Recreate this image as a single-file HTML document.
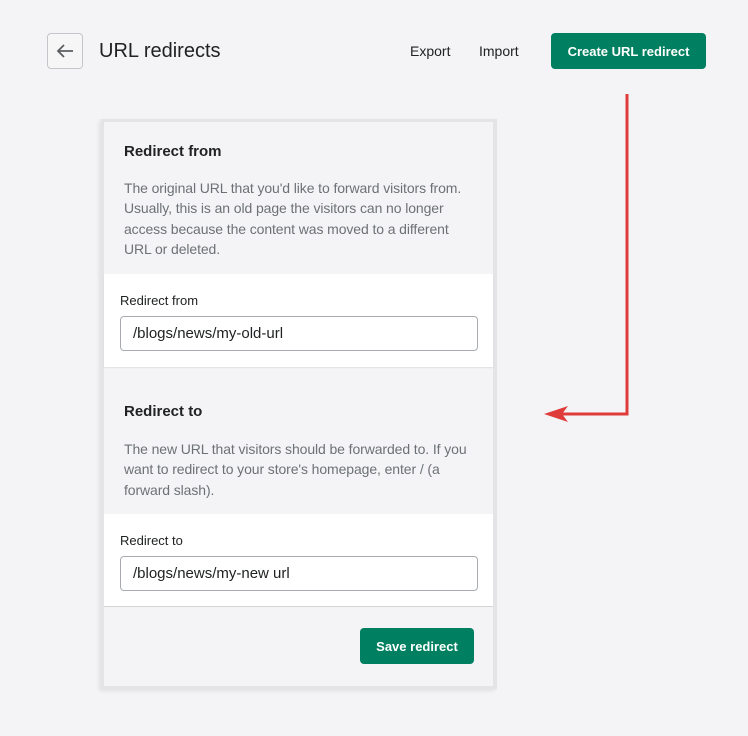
<!DOCTYPE html>
<html><head><meta charset="utf-8"><style>
*{margin:0;padding:0;box-sizing:border-box}
body{width:748px;height:736px;background:#f4f4f6;font-family:"Liberation Sans",sans-serif;position:relative;overflow:hidden;color:#202223}
.a{position:absolute;white-space:nowrap}
.back{left:47px;top:33px;width:36px;height:36px;border:1px solid #c4c7ca;border-radius:4px;background:#f6f6f7}
.btn{background:#008060;color:#fff;font-weight:bold;font-size:13px;border-radius:4px;display:flex;align-items:center;justify-content:center}
.card{left:101px;top:119px;width:396px;height:570px;background:#e4e4e6;box-shadow:-2px 2px 4px rgba(0,0,0,.08)}
.inner{left:104px;top:122px;width:389px;height:564px;background:#f4f4f6}
.white{background:#fff;left:104px;width:389px}
.h{font-size:15px;font-weight:bold;color:#202223}
.d{font-size:14px;line-height:20.3px;color:#6d7175;letter-spacing:-0.1px}
.lab{font-size:13px;color:#202223}
.inp{left:120px;width:358px;height:35px;border:1px solid #a8acb0;border-radius:4px;background:#fff;font-size:15px;padding-left:12px;line-height:33px;color:#202223}
</style></head><body>
<div class="a back"><svg width="34" height="34" viewBox="0 0 34 34"><path d="M25 17H10M16 11l-6 6 6 6" stroke="#5c5f62" stroke-width="1.8" fill="none"/></svg></div>
<div class="a" style="left:99px;top:40px;font-size:20px">URL redirects</div>
<div class="a" style="left:410px;top:43px;font-size:14px">Export</div>
<div class="a" style="left:479px;top:43px;font-size:14px">Import</div>
<div class="a btn" style="left:551px;top:33px;width:155px;height:36px">Create URL redirect</div>

<div class="a card"></div>
<div class="a inner"></div>
<div class="a h" style="left:124px;top:143px">Redirect from</div>
<div class="a d" style="left:124px;top:178px">The original URL that you'd like to forward visitors from.<br>Usually, this is an old page the visitors can no longer<br>access because the content was moved to a different<br>URL or deleted.</div>
<div class="a white" style="top:274px;height:93px;box-shadow:0 1px 1px rgba(0,0,0,.08)"></div>
<div class="a lab" style="left:120px;top:293px">Redirect from</div>
<div class="a inp" style="top:316px">/blogs/news/my-old-url</div>

<div class="a h" style="left:124px;top:403px">Redirect to</div>
<div class="a d" style="left:124px;top:439px">The new URL that visitors should be forwarded to. If you<br>want to redirect to your store's homepage, enter / (a<br>forward slash).</div>
<div class="a white" style="top:514px;height:93px;border-bottom:1px solid #d2d4d6"></div>
<div class="a lab" style="left:120px;top:533px">Redirect to</div>
<div class="a inp" style="top:556px">/blogs/news/my-new url</div>

<div class="a btn" style="left:360px;top:628px;width:114px;height:36px">Save redirect</div>

<svg class="a" style="left:0;top:0" width="748" height="736"><path d="M627 94V414H560" stroke="#e03b3b" stroke-width="3" fill="none"/><path d="M544 414L568 406L562 414L568 422Z" fill="#e03b3b"/></svg>
</body></html>
